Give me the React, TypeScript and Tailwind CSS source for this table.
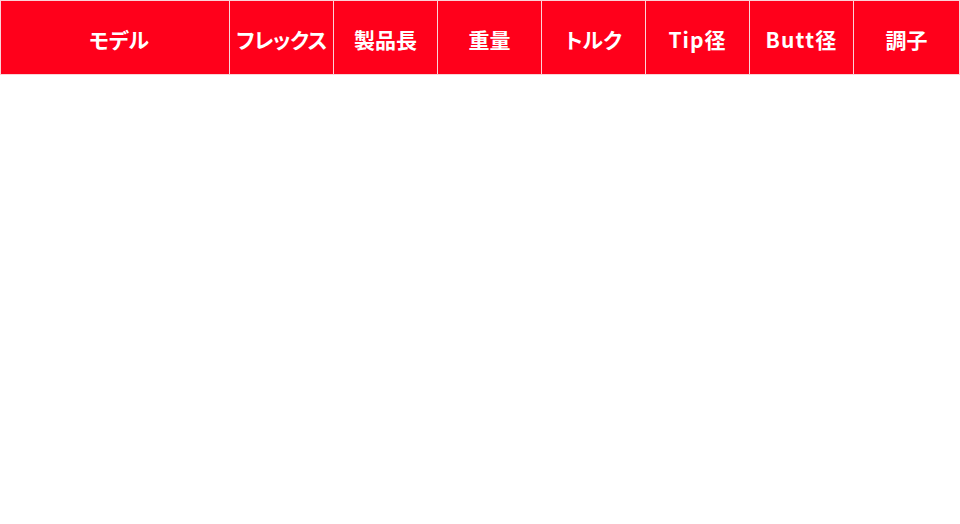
const headers = [
  { label: "フレックス", cls: "tracking-[-0.03em]" },
  { label: "製品長", cls: "" },
  { label: "重量", cls: "" },
  { label: "トルク", cls: "" },
  { label: "Tip径", cls: "tracking-[0.05em]" },
  { label: "Butt径", cls: "tracking-[0.06em]" },
  { label: "調子", cls: "" },
];

export default function App() {
  return (
    <div
      className="w-[960px] h-[524px] bg-white [font-feature-settings:'palt']"
      style={{ fontFamily: '"Noto Sans CJK JP", "Noto Sans", sans-serif' }}
    >
      <div className="grid grid-cols-[228px_repeat(6,103px)_105px] gap-px p-px bg-[#fbd3d8]">
        <div className="h-[73px] bg-[#ff001b] flex items-center justify-center text-white font-bold text-[21px] pl-2 pt-1">
          モデル
        </div>
        {headers.map((h) => (
          <div
            key={h.label}
            className={`h-[73px] bg-[#ff001b] flex items-center justify-center text-white font-bold text-[21px] pt-1 ${h.cls}`}
          >
            {h.label}
          </div>
        ))}
      </div>
    </div>
  );
}
